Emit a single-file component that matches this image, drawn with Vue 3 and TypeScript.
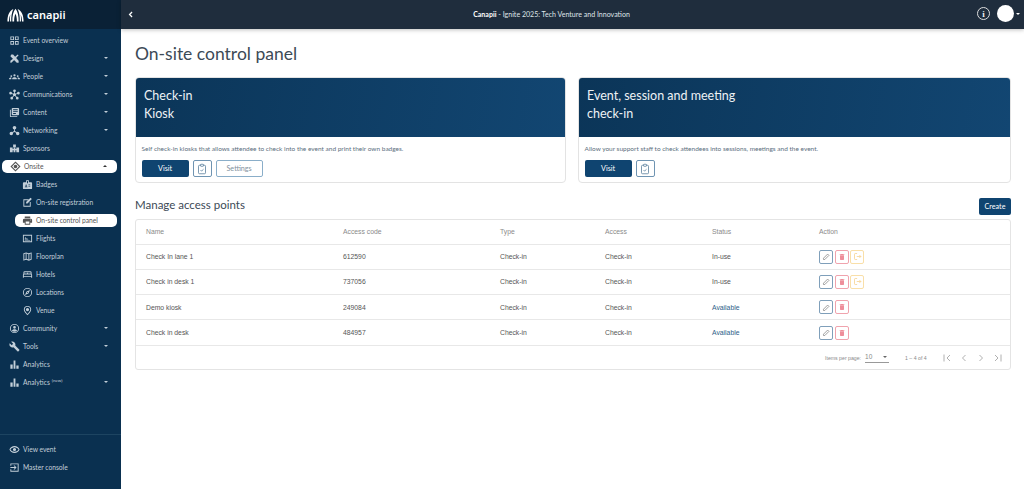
<template>
  <div class="shell">
    <aside class="sidebar">
      <div class="brand">
        <svg class="brand-mark" viewBox="0 0 20 16" width="17" height="14">
          <path d="M.5 15.500C.5 8 3 2.500 7.500.8 5.500 5 4.800 10 5 15.500H3.600C3.400 12 3.600 9.500 4 7.500 2.900 9.500 2.400 12.500 2.400 15.500ZM6.300 15.500C6.100 9 7.500 3.500 10 .5 12.500 3.500 13.900 9 13.700 15.500H11.600C11.600 11.500 11 8.500 10 6.500 9 8.500 8.400 11.500 8.400 15.500ZM19.500 15.500C19.500 8 17 2.500 12.500.8 14.500 5 15.200 10 15 15.500H16.400C16.600 12 16.400 9.500 16 7.500 17.100 9.500 17.600 12.500 17.600 15.500Z" fill="#fff" />
        </svg>
        <span class="brand-name">canapii</span>
      </div>
      <nav class="menu">
        <div
          v-for="item in menu"
          :key="item.label + (item.sup || '')"
          class="menu-item"
          :class="{ sub: item.sub, active: item.active }"
        >
          <svg class="menu-icon" viewBox="0 0 24 24" width="11" height="11"><path :d="item.icon" fill="currentColor" /></svg>
          <span class="menu-label">{{ item.label }}<sup v-if="item.sup">{{ item.sup }}</sup></span>
          <span v-if="item.caret" class="caret" :class="item.caret"></span>
        </div>
      </nav>
      <div class="menu-bottom">
        <div v-for="item in bottomMenu" :key="item.label" class="menu-item">
          <svg class="menu-icon" viewBox="0 0 24 24" width="11" height="11"><path :d="item.icon" fill="currentColor" /></svg>
          <span class="menu-label">{{ item.label }}</span>
        </div>
      </div>
    </aside>

    <div class="page">
      <header class="topbar">
        <svg class="back" viewBox="0 0 8 10" width="5" height="7"><path d="M6.500 1 2.500 5l4 4" fill="none" stroke="#fff" stroke-width="2" /></svg>
        <div class="event-title"><b>Canapii</b> - Ignite 2025: Tech Venture and Innovation</div>
        <div class="top-actions">
          <span class="info">i</span>
          <span class="avatar"></span>
          <span class="avatar-caret"></span>
        </div>
      </header>

      <main class="content">
        <h1>On-site control panel</h1>

        <div class="cards">
          <section v-for="card in cards" :key="card.first" class="card">
            <div class="card-head">
              <div>{{ card.first }}</div>
              <div>{{ card.second }}</div>
            </div>
            <div class="card-body">
              <p>{{ card.text }}</p>
              <div class="card-actions">
                <button class="btn-primary">Visit</button>
                <button class="btn-icon">
                  <svg viewBox="0 0 24 24" width="12" height="12" fill="none" stroke="#4f7595" stroke-width="1.500">
                    <rect x="5" y="4.500" width="14" height="17" rx="2" />
                    <rect x="9" y="2.500" width="6" height="4" rx="1" fill="#fff" />
                    <path d="m9 14 2.200 2.200L15 12.500" />
                  </svg>
                </button>
                <button v-if="card.settings" class="btn-outline">Settings</button>
              </div>
            </div>
          </section>
        </div>

        <div class="section-head">
          <h2>Manage access points</h2>
          <button class="btn-create">Create</button>
        </div>

        <div class="table-wrap">
          <table>
            <thead>
              <tr>
                <th class="col-name">Name</th>
                <th class="col-code">Access code</th>
                <th class="col-type">Type</th>
                <th class="col-access">Access</th>
                <th class="col-status">Status</th>
                <th>Action</th>
              </tr>
            </thead>
            <tbody>
              <tr v-for="row in rows" :key="row.name">
                <td>{{ row.name }}</td>
                <td>{{ row.code }}</td>
                <td>Check-in</td>
                <td>Check-in</td>
                <td :class="{ available: row.status === 'Available' }">{{ row.status }}</td>
                <td>
                  <div class="row-actions">
                    <span class="act edit">
                      <svg viewBox="0 0 24 24" width="9" height="9"><path d="M4 16.500V20h3.500L18.500 9 15 5.500 4 16.500Z" fill="none" stroke="#8c8c8c" stroke-width="2.200" /></svg>
                    </span>
                    <span class="act del">
                      <svg viewBox="0 0 24 24" width="8" height="8"><path d="M6 19a2 2 0 0 0 2 2h8a2 2 0 0 0 2-2V7H6v12ZM19 4h-3.500l-1-1h-5l-1 1H5v2h14V4Z" fill="#ee8e9a" /></svg>
                    </span>
                    <span v-if="row.inUse" class="act leave">
                      <svg viewBox="0 0 24 24" width="9" height="9" fill="none" stroke="#f6cf85" stroke-width="2"><path d="M11 4H6a2 2 0 0 0-2 2v12a2 2 0 0 0 2 2h5M10 12h11M17 8l4 4-4 4" /></svg>
                    </span>
                  </div>
                </td>
              </tr>
            </tbody>
          </table>
          <div class="pager">
            <span class="pager-label">Items per page:</span>
            <span class="pager-select">10<i></i></span>
            <span class="pager-range">1 – 4 of 4</span>
            <div class="pager-nav">
              <svg v-for="d in pagerIcons" :key="d" viewBox="0 0 24 24" width="12" height="12" fill="none" stroke="#b0b0b0" stroke-width="2"><path :d="d" /></svg>
            </div>
          </div>
        </div>
      </main>
    </div>
  </div>
</template>

<script setup lang="ts">
interface MenuItem {
  label: string;
  icon: string;
  caret?: 'down' | 'up';
  sub?: boolean;
  active?: boolean;
  sup?: string;
}

const barChart = 'M3 12h5v9H3v-9Zm7-9h4v18h-4V3Zm6 11h5v7h-5v-7Z';

const menu: MenuItem[] = [
  { label: 'Event overview', icon: 'M3 3h8v8H3V3Zm2 2v4h4V5H5Zm8-2h8v8h-8V3Zm2 2v4h4V5h-4ZM3 13h8v8H3v-8Zm2 2v4h4v-4H5Zm8-2h8v8h-8v-8Zm2 2v4h4v-4h-4Z' },
  { label: 'Design', caret: 'down', icon: 'M5 3 9 3 21 17 21 21 17 21 3 7ZM19 3 21 5 14.500 12 12 9.500ZM3 17 9.500 12 12 14.500 5 21 3 21Z' },
  { label: 'People', caret: 'down', icon: 'M12 7a2.500 2.500 0 1 1 0 5 2.500 2.500 0 0 1 0-5ZM5 9a2 2 0 1 1 0 4 2 2 0 0 1 0-4Zm14 0a2 2 0 1 1 0 4 2 2 0 0 1 0-4ZM7 18v-1.500c0-1.800 2.500-3 5-3s5 1.200 5 3V18H7ZM0 18v-1.200C0 15.300 2 14 4.500 14c.5 0 .8 0 1.100.1-.5.700-.6 1.500-.6 2.400V18H0Zm24 0h-5v-1.500c0-.9-.1-1.700-.6-2.400.3-.1.600-.1 1.100-.1 2.500 0 4.500 1.300 4.500 2.800V18Z' },
  { label: 'Communications', caret: 'down', icon: 'M12 8.500a3.500 3.500 0 1 1 0 7 3.500 3.500 0 0 1 0-7ZM12 1a3 3 0 1 1 0 6 3 3 0 0 1 0-6ZM3.500 6a3 3 0 1 1 0 6 3 3 0 0 1 0-6Zm17 0a3 3 0 1 1 0 6 3 3 0 0 1 0-6ZM6 17a3 3 0 1 1 0 6 3 3 0 0 1 0-6Zm12 0a3 3 0 1 1 0 6 3 3 0 0 1 0-6ZM5.500 8.500l5 2.500-.7 1.500-5-2.500Zm13 0 .7 1.500-5 2.500-.7-1.500ZM11 6h2v4h-2ZM9.500 14l1.400 1-3.500 4.500-1.400-1Zm5 0 3.500 4.500-1.400 1-3.500-4.500Z' },
  { label: 'Content', caret: 'down', icon: 'M4 6H2v14a2 2 0 0 0 2 2h14v-2H4V6Zm16-4H8a2 2 0 0 0-2 2v12a2 2 0 0 0 2 2h12a2 2 0 0 0 2-2V4a2 2 0 0 0-2-2Zm-1 9H9V9h10v2Zm-4 4H9v-2h6v2Zm4-8H9V5h10v2Z' },
  { label: 'Networking', caret: 'down', icon: 'M12 2a4 4 0 1 1 0 8 4 4 0 0 1 0-8ZM5 14.500a3.800 3.800 0 1 1 0 7.600 3.800 3.800 0 0 1 0-7.600Zm14 0a3.800 3.800 0 1 1 0 7.600 3.800 3.800 0 0 1 0-7.600ZM11 9h2v4l4.500 3-1 1.700L12 15l-4.500 2.700-1-1.700 4.500-3V9Z' },
  { label: 'Sponsors', icon: 'M9 3h6v6H9V3ZM2 10h6v3h2v-3h4v3h2v-3h6v10h-6v-4H8v4H2V10Zm8 5h4v5h-4v-5Z' },
  { label: 'Onsite', caret: 'up', active: true, icon: 'M12 1 23 12 12 23 1 12 12 1Zm0 3.500L4.500 12l7.500 7.500 7.500-7.500L12 4.500ZM12 8a4 4 0 1 1 0 8 4 4 0 0 1 0-8Z' },
  { label: 'Badges', sub: true, icon: 'M20 7h-5V4a2 2 0 0 0-2-2h-2a2 2 0 0 0-2 2v3H4a2 2 0 0 0-2 2v11a2 2 0 0 0 2 2h16a2 2 0 0 0 2-2V9a2 2 0 0 0-2-2ZM9 12a1.500 1.500 0 1 1 0 3 1.500 1.500 0 0 1 0-3Zm3 6H6v-.800c0-1 2-1.500 3-1.500s3 .5 3 1.500V18Zm1-9h-2V4h2v5Zm5 7.500h-4V15h4v1.500Zm0-3h-4V12h4v1.500Z' },
  { label: 'On-site registration', sub: true, icon: 'M3 5h11v2H5v12h12v-8h2v10H3V5Zm15.500-3.500 3 3L12 14H9v-3l9.500-9.500Z' },
  { label: 'On-site control panel', sub: true, active: true, icon: 'M19 8H5a3 3 0 0 0-3 3v6h4v4h12v-4h4v-6a3 3 0 0 0-3-3Zm-3 11H8v-5h8v5Zm3-7a1 1 0 1 1 0-2 1 1 0 0 1 0 2Zm-1-9H6v4h12V3Z' },
  { label: 'Flights', sub: true, icon: 'M2 4h20v16H2V4Zm2 2v12h16V6H4Zm2 8h8l-1.500-2H12l-1 1.500L8 9H6.500l1.500 3H6v2Zm0 2h12v1H6v-1Z' },
  { label: 'Floorplan', sub: true, icon: 'm20.500 3-.160.030L15 5.100 9 3 3.360 4.900c-.210.070-.360.250-.360.480V20.500a.5.5 0 0 0 .5.5l.160-.030L9 18.900l6 2.100 5.640-1.900c.210-.070.360-.250.360-.480V3.500a.5.5 0 0 0-.5-.5ZM10 5.470l4 1.400v11.660l-4-1.400V5.470Zm-5 .99 3-1.010v11.700l-3 1.160V6.460Zm14 11.080-3 1.010V6.860l3-1.160v11.840Z' },
  { label: 'Hotels', sub: true, icon: 'M21 10.800V8a3 3 0 0 0-3-3H6a3 3 0 0 0-3 3v2.800A3 3 0 0 0 2 13v6h2v-2h16v2h2v-6a3 3 0 0 0-1-2.200ZM5 8a1 1 0 0 1 1-1h12a1 1 0 0 1 1 1v2h-6V8h-2v2H5V8Zm15 7H4v-2a1 1 0 0 1 1-1h14a1 1 0 0 1 1 1v2Z' },
  { label: 'Locations', sub: true, icon: 'M12 2a10 10 0 1 0 0 20 10 10 0 0 0 0-20Zm0 18a8 8 0 1 1 0-16 8 8 0 0 1 0 16ZM6.500 17.500l7.510-3.490L17.500 6.500 9.990 9.990 6.500 17.500Zm5.500-6.600a1.100 1.100 0 1 1 0 2.200 1.100 1.100 0 0 1 0-2.200Z' },
  { label: 'Venue', sub: true, icon: 'M12 2a8 8 0 0 0-8 8c0 5.400 8 12.500 8 12.500S20 15.400 20 10a8 8 0 0 0-8-8Zm0 17.700C9.500 17.300 6 13.200 6 10a6 6 0 1 1 12 0c0 3.200-3.500 7.300-6 9.700ZM12 6.500a3.500 3.500 0 1 1 0 7 3.500 3.500 0 0 1 0-7Z' },
  { label: 'Community', caret: 'down', icon: 'M12 2a10 10 0 1 0 0 20 10 10 0 0 0 0-20Zm0 18a8 8 0 1 1 0-16 8 8 0 0 1 0 16Zm0-13.500a3 3 0 1 1 0 6 3 3 0 0 1 0-6ZM6.500 17c.5-2 3-3.200 5.500-3.200s5 1.200 5.500 3.200c-1.400 1.300-3.400 2-5.500 2s-4.100-.7-5.500-2Z' },
  { label: 'Tools', caret: 'down', icon: 'M22.700 19l-9.100-9.100c.9-2.300.4-5-1.500-6.900-2-2-5-2.400-7.400-1.300L9 6 6 9 1.600 4.700C.400 7.100.900 10.100 2.900 12.100c1.900 1.900 4.600 2.400 6.900 1.500l9.100 9.100c.4.400 1 .4 1.400 0l2.300-2.300c.5-.4.5-1.100.1-1.400Z' },
  { label: 'Analytics', icon: barChart },
  { label: 'Analytics', sup: '(new)', caret: 'down', icon: barChart },
];

const bottomMenu: MenuItem[] = [
  { label: 'View event', icon: 'M12 4.500C7 4.500 2.700 7.600 1 12c1.700 4.400 6 7.500 11 7.500s9.300-3.100 11-7.500c-1.700-4.400-6-7.500-11-7.500Zm0 12.500c-3.700 0-7-2-8.800-5C5 9 8.300 7 12 7s7 2 8.800 5c-1.800 3-5.100 5-8.800 5Zm0-8.500a3.500 3.500 0 1 0 0 7 3.500 3.500 0 0 0 0-7Z' },
  { label: 'Master console', icon: 'M3 3h18v18H3v-5h2v3h14V5H5v3H3V3Zm7.100 12.600L11.500 17l5-5-5-5-1.400 1.400 2.600 2.600H3v2h9.700l-2.600 2.600Z' },
];

const cards = [
  {
    first: 'Check-in',
    second: 'Kiosk',
    text: 'Self check-in kiosks that allows attendee to check into the event and print their own badges.',
    settings: true,
  },
  {
    first: 'Event, session and meeting',
    second: 'check-in',
    text: 'Allow your support staff to check attendees into sessions, meetings and the event.',
    settings: false,
  },
];

const rows = [
  { name: 'Check In lane 1', code: '612590', status: 'In-use', inUse: true },
  { name: 'Check in desk 1', code: '737056', status: 'In-use', inUse: true },
  { name: 'Demo kiosk', code: '249084', status: 'Available', inUse: false },
  { name: 'Check in desk', code: '484957', status: 'Available', inUse: false },
];

const pagerIcons = [
  'M6 5v14M18 6l-6 6 6 6',
  'M15 6l-6 6 6 6',
  'M9 6l6 6-6 6',
  'M6 6l6 6-6 6M18 5v14',
];
</script>

<style>
html,
body {
  margin: 0;
  background: #fff;
}
</style>

<style scoped>
.shell {
  display: flex;
  width: 1024px;
  height: 489px;
  overflow: hidden;
  font-family: Lato, "Open Sans", sans-serif;
  color: #333;
}

.sidebar {
  width: 121px;
  flex: none;
  display: flex;
  flex-direction: column;
  background: #0a3050;
  color: #c3cfd9;
  font-size: 6.700px;
}

.brand {
  height: 29px;
  display: flex;
  align-items: center;
  gap: 3px;
  padding-left: 7px;
  background: #0a2136;
}

.brand-name {
  font-family: "Noto Sans", sans-serif;
  font-size: 11px;
  font-weight: 600;
  color: #fff;
}

.menu {
  padding-top: 2px;
}

.menu-item {
  position: relative;
  height: 18px;
  display: flex;
  align-items: center;
  padding-left: 9px;
  gap: 3px;
  box-sizing: border-box;
}

.menu-item.sub {
  padding-left: 22px;
}

.menu-item.active {
  height: 13px;
  margin: 2.500px 4px 2.500px 2px;
  padding-left: 8px;
  background: #fff;
  color: #555;
  border-radius: 5px;
}

.menu-item.sub.active {
  margin: 2.500px 4px 2.500px 15px;
  padding-left: 7px;
}

.menu-icon {
  flex: none;
}

.menu-label sup {
  font-size: 4.500px;
  margin-left: 2px;
}

.caret {
  position: absolute;
  right: 13px;
  top: 8px;
  border-left: 2px solid transparent;
  border-right: 2px solid transparent;
}

.caret.down {
  border-top: 2px solid #c3cfd9;
}

.caret.up {
  top: 5px;
  right: 10px;
  border-bottom: 2px solid #333;
}

.menu-bottom {
  margin-top: auto;
  padding: 5px 0 13px;
  border-top: 1px solid #1d4461;
}

.page {
  flex: 1;
  min-width: 0;
  display: flex;
  flex-direction: column;
}

.topbar {
  position: relative;
  height: 29px;
  flex: none;
  display: flex;
  align-items: center;
  justify-content: center;
  padding-right: 42px;
  background: #1f2d3d;
  color: #dfe4e9;
  font-size: 7.050px;
  box-shadow: 0 1px 4px rgba(0, 0, 0, 0.25);
}

.back {
  position: absolute;
  left: 7px;
  top: 11px;
}

.event-title b {
  color: #fff;
}

.top-actions {
  position: absolute;
  right: 4px;
  top: 5px;
  display: flex;
  align-items: center;
}

.info {
  width: 11px;
  height: 11px;
  margin-right: 7px;
  border: 1px solid #ddd;
  border-radius: 50%;
  display: flex;
  align-items: center;
  justify-content: center;
  font-family: "Liberation Serif", serif;
  font-size: 9px;
  font-weight: 700;
  color: #eee;
}

.avatar {
  width: 17px;
  height: 17px;
  margin-right: 2px;
  border-radius: 50%;
  background: #fff;
}

.avatar-caret {
  border-left: 2px solid transparent;
  border-right: 2px solid transparent;
  border-top: 2px solid #fff;
}

.content {
  padding: 14px 13px 0 14px;
}

h1 {
  margin: 0 0 13px;
  font-size: 17.500px;
  line-height: 21px;
  font-weight: 400;
  color: #3c4a56;
}

.cards {
  display: grid;
  grid-template-columns: 431px 433px;
  gap: 12px;
}

.card {
  height: 106px;
  box-sizing: border-box;
  border: 1px solid #e3e3e3;
  border-radius: 4px;
  overflow: hidden;
  background: #fff;
}

.card-head {
  height: 60px;
  box-sizing: border-box;
  margin: -1px -1px 0;
  padding: 10px 9px 0;
  background: linear-gradient(100deg, #0b3558, #124672);
  color: #eef2f5;
  font-size: 12.500px;
  line-height: 18px;
}

.card-body {
  padding: 7px 6px 7px 5.600px;
}

.card-body p {
  margin: 0 0 6px;
  font-size: 6.500px;
  line-height: 10px;
  color: #5c6f80;
}

.card-actions {
  display: flex;
  gap: 4px;
}

button {
  font-family: inherit;
  padding: 0;
  cursor: pointer;
}

.btn-primary,
.btn-create {
  border: 0;
  border-radius: 2px;
  background: #0f4470;
  color: #fff;
  font-size: 7.200px;
}

.btn-primary {
  width: 47px;
  height: 17px;
}

.btn-icon {
  width: 19px;
  height: 17px;
  display: flex;
  align-items: center;
  justify-content: center;
  background: #fff;
  border: 1px solid #6f94b2;
  border-radius: 2px;
}

.btn-outline {
  width: 47px;
  height: 17px;
  background: #fff;
  border: 1px solid #8aaec9;
  border-radius: 2px;
  color: #8292a0;
  font-size: 7.200px;
}

.section-head {
  display: flex;
  justify-content: space-between;
  align-items: flex-start;
  height: 18px;
  margin-top: 15px;
  margin-bottom: 3px;
}

h2 {
  margin: 0;
  font-size: 11.500px;
  line-height: 14px;
  font-weight: 400;
  color: #3c4a56;
}

.btn-create {
  width: 32px;
  height: 17px;
}

.table-wrap {
  border: 1px solid #e4e4e4;
  border-radius: 3px;
  height: 151px;
  box-sizing: border-box;
}

table {
  width: 100%;
  border-collapse: collapse;
  table-layout: fixed;
  font-family: "Liberation Sans", Arial, sans-serif;
  font-size: 6.800px;
}

th,
td {
  box-sizing: border-box;
  padding: 0 0 0 10px;
  border-bottom: 1px solid #e8e8e8;
}

th {
  height: 24px;
  text-align: left;
  font-weight: 400;
  color: #8a8a8a;
}

td {
  height: 25.300px;
  color: #555;
}

td.available {
  color: #2e6188;
}

.col-name {
  width: 197px;
}

.col-code {
  width: 157px;
}

.col-type {
  width: 105px;
}

.col-access {
  width: 107px;
}

.col-status {
  width: 107px;
}

.row-actions {
  display: flex;
  gap: 1.500px;
}

.act {
  width: 14px;
  height: 14px;
  box-sizing: border-box;
  display: flex;
  align-items: center;
  justify-content: center;
  border: 1px solid;
  border-radius: 2px;
}

.act.edit {
  border-color: #7f9fba;
}

.act.del {
  border-color: #f0a3ad;
}

.act.leave {
  border-color: #f9dfa8;
}

.pager {
  height: 24px;
  display: flex;
  align-items: center;
  font-family: "Liberation Sans", Arial, sans-serif;
  font-size: 5.200px;
  color: #8a8a8a;
  white-space: nowrap;
  padding-left: 689px;
  padding-right: 6px;
}

.pager-select {
  position: relative;
  width: 24px;
  margin-left: 4px;
  height: 10px;
  line-height: 10px;
  border-bottom: 1px solid #999;
  font-size: 6.500px;
}

.pager-select i {
  position: absolute;
  right: 2px;
  top: 4px;
  border-left: 2px solid transparent;
  border-right: 2px solid transparent;
  border-top: 2px solid #666;
}

.pager-range {
  margin-left: 16px;
}

.pager-nav {
  display: flex;
  gap: 5px;
  margin-left: auto;
}
</style>
